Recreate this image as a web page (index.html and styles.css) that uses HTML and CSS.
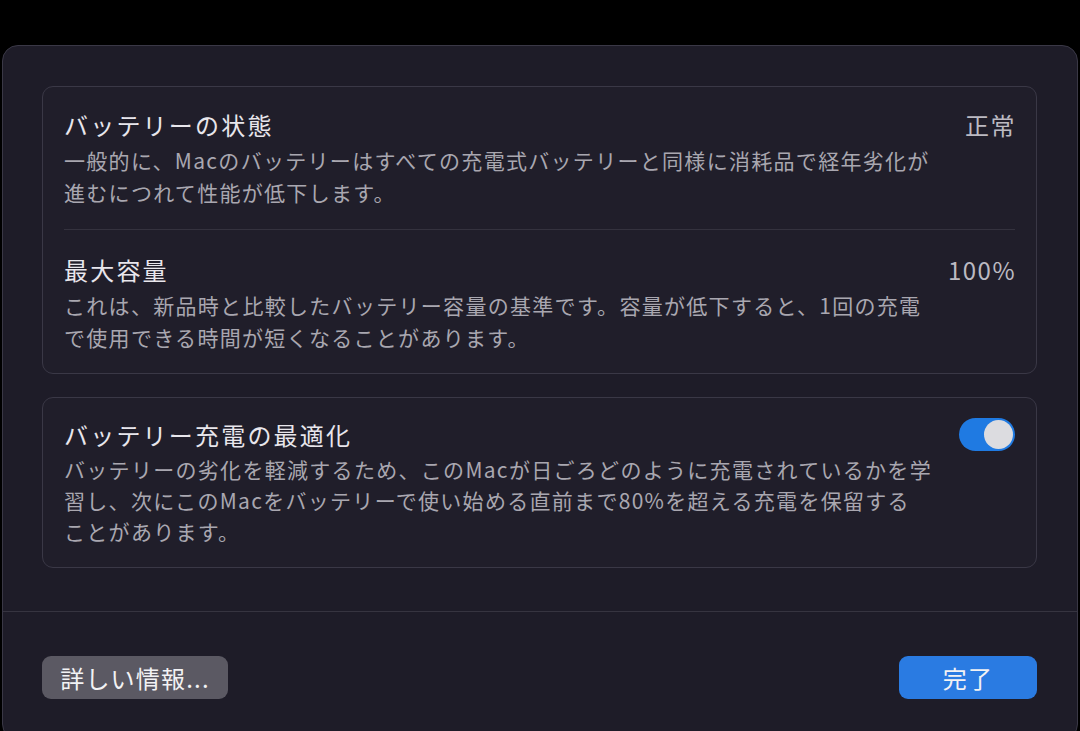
FILE: index.html
```html
<!DOCTYPE html>
<html lang="ja">
<head>
<meta charset="utf-8">
<link rel="stylesheet" href="styles.css">
</head>
<body>
<div class="window">
  <div class="content">
    <section class="card">
      <div class="row">
        <div class="text">
          <div class="title">バッテリーの状態</div>
          <div class="desc">一般的に、Macのバッテリーはすべての充電式バッテリーと同様に消耗品で経年劣化が<br>進むにつれて性能が低下します。</div>
        </div>
        <div class="value">正常</div>
      </div>
      <div class="divider"></div>
      <div class="row row2">
        <div class="text">
          <div class="title">最大容量</div>
          <div class="desc">これは、新品時と比較したバッテリー容量の基準です。容量が低下すると、1回の充電<br>で使用できる時間が短くなることがあります。</div>
        </div>
        <div class="value">100%</div>
      </div>
    </section>
    <section class="card card2">
      <div class="row row3">
        <div class="text">
          <div class="title">バッテリー充電の最適化</div>
          <div class="desc">バッテリーの劣化を軽減するため、このMacが日ごろどのように充電されているかを学<br>習し、次にこのMacをバッテリーで使い始める直前まで80%を超える充電を保留する<br>ことがあります。</div>
        </div>
        <div class="toggle"><div class="knob"></div></div>
      </div>
    </section>
  </div>
  <div class="footer">
    <button class="btn btn-secondary">詳しい情報...</button>
    <button class="btn btn-primary">完了</button>
  </div>
</div>
</body>
</html>
```
FILE: styles.css
```css
html, body {
  margin: 0;
  padding: 0;
  background: #000;
}
body {
  padding: 45px 0 0 2px;
  height: 731px;
  box-sizing: border-box;
  overflow: hidden;
  font-family: "Noto Sans CJK JP", "Noto Sans", sans-serif;
}
.window {
  width: 1076px;
  height: 695px;
  box-sizing: border-box;
  background: #1e1c28;
  border: 1px solid #3a3846;
  border-radius: 16px;
  display: flex;
  flex-direction: column;
}
.content {
  padding: 40px 40px 0 39px;
  display: flex;
  flex-direction: column;
  gap: 23px;
}
.card {
  border: 1px solid #3a3846;
  border-radius: 11px;
  background: #201e2a;
  padding: 0 21px;
}
.row {
  display: flex;
  justify-content: space-between;
  align-items: flex-start;
  padding: 22px 0 21px;
}
.row2 {
  padding: 24px 0 20px;
}
.row3 {
  padding: 21px 0 20px;
}
.title {
  color: #e8e6ec;
  font-size: 24px;
  font-weight: 400;
  line-height: 32px;
  letter-spacing: 2.2px;
}
.desc {
  margin-top: 3px;
  color: #a9a7b0;
  font-size: 21px;
  line-height: 32px;
  letter-spacing: 1.3px;
  white-space: nowrap;
}
.card2 .desc {
  line-height: 31px;
}
.value {
  color: #bcbac2;
  font-size: 24px;
  line-height: 32px;
  letter-spacing: 1.5px;
  margin-right: -1px;
}
.divider {
  height: 1px;
  background: #34323e;
}
.toggle {
  width: 56px;
  height: 33px;
  border-radius: 17px;
  background: #1f7ae2;
  display: flex;
  justify-content: flex-end;
  align-items: center;
  padding: 0 2px;
  box-sizing: border-box;
  margin-top: -1px;
}
.knob {
  width: 29px;
  height: 29px;
  border-radius: 50%;
  background: #dcdce0;
}
.footer {
  margin-top: 43px;
  border-top: 1px solid #363440;
  padding: 44px 40px 0 39px;
  display: flex;
  justify-content: space-between;
}
.btn {
  font-family: "Noto Sans CJK JP", "Noto Sans", sans-serif;
  font-size: 24px;
  height: 43px;
  border: none;
  border-radius: 9px;
  color: #f2f2f4;
  padding: 0;
  letter-spacing: 1.2px;
}
.btn-secondary {
  width: 186px;
  background: #5b5963;
}
.btn-primary {
  width: 138px;
  background: #2a7be2;
}
```
